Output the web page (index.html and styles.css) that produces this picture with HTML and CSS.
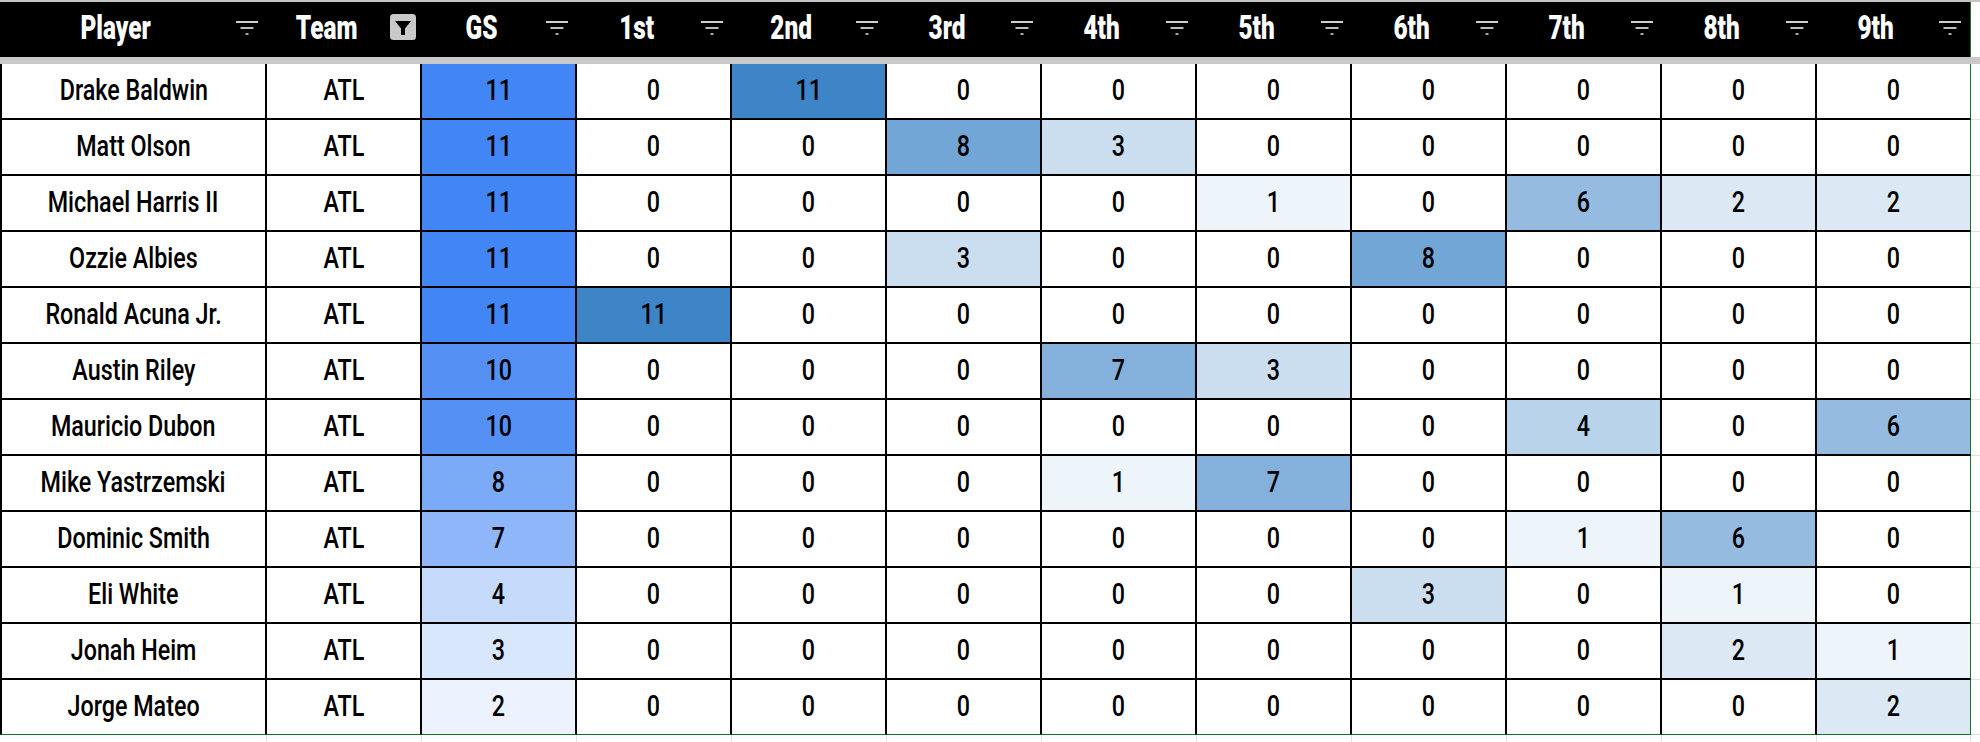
FILE: index.html
```html
<!DOCTYPE html>
<html lang="en">
<head>
<meta charset="utf-8">
<title>Batting order starts</title>
<link rel="stylesheet" href="styles.css">
</head>
<body>
<div class="sheet">
  <div class="topline"></div>
  <div class="row head">
    <div class="hc"><div class="label"><span>Player</span></div><svg class="filter" viewBox="0 0 22 14"><rect x="0" y="0" width="22" height="2" fill="#cfcfcf"/><rect x="4.5" y="6" width="13" height="2" fill="#bdbdbd"/><rect x="9.5" y="12" width="3" height="2" fill="#a8a8a8"/></svg></div>
    <div class="hc"><div class="label"><span>Team</span></div><svg class="filter-on" viewBox="0 0 26 26"><rect x="0" y="0" width="26" height="26" rx="3.5" fill="#c9c9c9"/><path d="M5 7H21L15 14.5V21H11V14.5Z" fill="#000"/></svg></div>
    <div class="hc"><div class="label"><span>GS</span></div><svg class="filter" viewBox="0 0 22 14"><rect x="0" y="0" width="22" height="2" fill="#cfcfcf"/><rect x="4.5" y="6" width="13" height="2" fill="#bdbdbd"/><rect x="9.5" y="12" width="3" height="2" fill="#a8a8a8"/></svg></div>
    <div class="hc"><div class="label"><span>1st</span></div><svg class="filter" viewBox="0 0 22 14"><rect x="0" y="0" width="22" height="2" fill="#cfcfcf"/><rect x="4.5" y="6" width="13" height="2" fill="#bdbdbd"/><rect x="9.5" y="12" width="3" height="2" fill="#a8a8a8"/></svg></div>
    <div class="hc"><div class="label"><span>2nd</span></div><svg class="filter" viewBox="0 0 22 14"><rect x="0" y="0" width="22" height="2" fill="#cfcfcf"/><rect x="4.5" y="6" width="13" height="2" fill="#bdbdbd"/><rect x="9.5" y="12" width="3" height="2" fill="#a8a8a8"/></svg></div>
    <div class="hc"><div class="label"><span>3rd</span></div><svg class="filter" viewBox="0 0 22 14"><rect x="0" y="0" width="22" height="2" fill="#cfcfcf"/><rect x="4.5" y="6" width="13" height="2" fill="#bdbdbd"/><rect x="9.5" y="12" width="3" height="2" fill="#a8a8a8"/></svg></div>
    <div class="hc"><div class="label"><span>4th</span></div><svg class="filter" viewBox="0 0 22 14"><rect x="0" y="0" width="22" height="2" fill="#cfcfcf"/><rect x="4.5" y="6" width="13" height="2" fill="#bdbdbd"/><rect x="9.5" y="12" width="3" height="2" fill="#a8a8a8"/></svg></div>
    <div class="hc"><div class="label"><span>5th</span></div><svg class="filter" viewBox="0 0 22 14"><rect x="0" y="0" width="22" height="2" fill="#cfcfcf"/><rect x="4.5" y="6" width="13" height="2" fill="#bdbdbd"/><rect x="9.5" y="12" width="3" height="2" fill="#a8a8a8"/></svg></div>
    <div class="hc"><div class="label"><span>6th</span></div><svg class="filter" viewBox="0 0 22 14"><rect x="0" y="0" width="22" height="2" fill="#cfcfcf"/><rect x="4.5" y="6" width="13" height="2" fill="#bdbdbd"/><rect x="9.5" y="12" width="3" height="2" fill="#a8a8a8"/></svg></div>
    <div class="hc"><div class="label"><span>7th</span></div><svg class="filter" viewBox="0 0 22 14"><rect x="0" y="0" width="22" height="2" fill="#cfcfcf"/><rect x="4.5" y="6" width="13" height="2" fill="#bdbdbd"/><rect x="9.5" y="12" width="3" height="2" fill="#a8a8a8"/></svg></div>
    <div class="hc"><div class="label"><span>8th</span></div><svg class="filter" viewBox="0 0 22 14"><rect x="0" y="0" width="22" height="2" fill="#cfcfcf"/><rect x="4.5" y="6" width="13" height="2" fill="#bdbdbd"/><rect x="9.5" y="12" width="3" height="2" fill="#a8a8a8"/></svg></div>
    <div class="hc hc-last"><div class="label"><span>9th</span></div><svg class="filter" viewBox="0 0 22 14"><rect x="0" y="0" width="22" height="2" fill="#cfcfcf"/><rect x="4.5" y="6" width="13" height="2" fill="#bdbdbd"/><rect x="9.5" y="12" width="3" height="2" fill="#a8a8a8"/></svg></div>
    <div class="hfill"></div>
  </div>
  <div class="band"></div>

  <div class="row"><div class="c first"><span>Drake Baldwin</span></div><div class="c"><span>ATL</span></div><div class="c g11"><span>11</span></div><div class="c"><span>0</span></div><div class="c b11"><span>11</span></div><div class="c"><span>0</span></div><div class="c"><span>0</span></div><div class="c"><span>0</span></div><div class="c"><span>0</span></div><div class="c"><span>0</span></div><div class="c"><span>0</span></div><div class="c last"><span>0</span></div><div class="fill"></div></div>
  <div class="row"><div class="c first"><span>Matt Olson</span></div><div class="c"><span>ATL</span></div><div class="c g11"><span>11</span></div><div class="c"><span>0</span></div><div class="c"><span>0</span></div><div class="c b8"><span>8</span></div><div class="c b3"><span>3</span></div><div class="c"><span>0</span></div><div class="c"><span>0</span></div><div class="c"><span>0</span></div><div class="c"><span>0</span></div><div class="c last"><span>0</span></div><div class="fill"></div></div>
  <div class="row"><div class="c first"><span>Michael Harris II</span></div><div class="c"><span>ATL</span></div><div class="c g11"><span>11</span></div><div class="c"><span>0</span></div><div class="c"><span>0</span></div><div class="c"><span>0</span></div><div class="c"><span>0</span></div><div class="c b1"><span>1</span></div><div class="c"><span>0</span></div><div class="c b6"><span>6</span></div><div class="c b2"><span>2</span></div><div class="c last b2"><span>2</span></div><div class="fill"></div></div>
  <div class="row"><div class="c first"><span>Ozzie Albies</span></div><div class="c"><span>ATL</span></div><div class="c g11"><span>11</span></div><div class="c"><span>0</span></div><div class="c"><span>0</span></div><div class="c b3"><span>3</span></div><div class="c"><span>0</span></div><div class="c"><span>0</span></div><div class="c b8"><span>8</span></div><div class="c"><span>0</span></div><div class="c"><span>0</span></div><div class="c last"><span>0</span></div><div class="fill"></div></div>
  <div class="row"><div class="c first"><span>Ronald Acuna Jr.</span></div><div class="c"><span>ATL</span></div><div class="c g11"><span>11</span></div><div class="c b11"><span>11</span></div><div class="c"><span>0</span></div><div class="c"><span>0</span></div><div class="c"><span>0</span></div><div class="c"><span>0</span></div><div class="c"><span>0</span></div><div class="c"><span>0</span></div><div class="c"><span>0</span></div><div class="c last"><span>0</span></div><div class="fill"></div></div>
  <div class="row"><div class="c first"><span>Austin Riley</span></div><div class="c"><span>ATL</span></div><div class="c g10"><span>10</span></div><div class="c"><span>0</span></div><div class="c"><span>0</span></div><div class="c"><span>0</span></div><div class="c b7"><span>7</span></div><div class="c b3"><span>3</span></div><div class="c"><span>0</span></div><div class="c"><span>0</span></div><div class="c"><span>0</span></div><div class="c last"><span>0</span></div><div class="fill"></div></div>
  <div class="row"><div class="c first"><span>Mauricio Dubon</span></div><div class="c"><span>ATL</span></div><div class="c g10"><span>10</span></div><div class="c"><span>0</span></div><div class="c"><span>0</span></div><div class="c"><span>0</span></div><div class="c"><span>0</span></div><div class="c"><span>0</span></div><div class="c"><span>0</span></div><div class="c b4"><span>4</span></div><div class="c"><span>0</span></div><div class="c last b6"><span>6</span></div><div class="fill"></div></div>
  <div class="row"><div class="c first"><span>Mike Yastrzemski</span></div><div class="c"><span>ATL</span></div><div class="c g8"><span>8</span></div><div class="c"><span>0</span></div><div class="c"><span>0</span></div><div class="c"><span>0</span></div><div class="c b1"><span>1</span></div><div class="c b7"><span>7</span></div><div class="c"><span>0</span></div><div class="c"><span>0</span></div><div class="c"><span>0</span></div><div class="c last"><span>0</span></div><div class="fill"></div></div>
  <div class="row"><div class="c first"><span>Dominic Smith</span></div><div class="c"><span>ATL</span></div><div class="c g7"><span>7</span></div><div class="c"><span>0</span></div><div class="c"><span>0</span></div><div class="c"><span>0</span></div><div class="c"><span>0</span></div><div class="c"><span>0</span></div><div class="c"><span>0</span></div><div class="c b1"><span>1</span></div><div class="c b6"><span>6</span></div><div class="c last"><span>0</span></div><div class="fill"></div></div>
  <div class="row"><div class="c first"><span>Eli White</span></div><div class="c"><span>ATL</span></div><div class="c g4"><span>4</span></div><div class="c"><span>0</span></div><div class="c"><span>0</span></div><div class="c"><span>0</span></div><div class="c"><span>0</span></div><div class="c"><span>0</span></div><div class="c b3"><span>3</span></div><div class="c"><span>0</span></div><div class="c b1"><span>1</span></div><div class="c last"><span>0</span></div><div class="fill"></div></div>
  <div class="row"><div class="c first"><span>Jonah Heim</span></div><div class="c"><span>ATL</span></div><div class="c g3"><span>3</span></div><div class="c"><span>0</span></div><div class="c"><span>0</span></div><div class="c"><span>0</span></div><div class="c"><span>0</span></div><div class="c"><span>0</span></div><div class="c"><span>0</span></div><div class="c"><span>0</span></div><div class="c b2"><span>2</span></div><div class="c last b1"><span>1</span></div><div class="fill"></div></div>
  <div class="row row-end"><div class="c first"><span>Jorge Mateo</span></div><div class="c"><span>ATL</span></div><div class="c g2"><span>2</span></div><div class="c"><span>0</span></div><div class="c"><span>0</span></div><div class="c"><span>0</span></div><div class="c"><span>0</span></div><div class="c"><span>0</span></div><div class="c"><span>0</span></div><div class="c"><span>0</span></div><div class="c"><span>0</span></div><div class="c last b2"><span>2</span></div><div class="fill"></div></div>

  <div class="row ghost"><div class="gc"></div><div class="gc"></div><div class="gc"></div><div class="gc"></div><div class="gc"></div><div class="gc"></div><div class="gc"></div><div class="gc"></div><div class="gc"></div><div class="gc"></div><div class="gc"></div><div class="gc"></div><div class="gfill"></div></div>
</div>
</body>
</html>
```

FILE: styles.css
```css
* {
  box-sizing: border-box;
  margin: 0;
  padding: 0;
}

body {
  margin: 0;
  width: 1980px;
  height: 742px;
  overflow: hidden;
  background: #ffffff;
  font-family: Roboto, "Liberation Sans", Arial, sans-serif;
  color: #000;
}

.sheet {
  display: flex;
  flex-direction: column;
  width: 1980px;
}

.topline {
  height: 2px;
  background: #c4c4c4;
}

.row {
  display: grid;
  grid-template-columns: 267px repeat(10, 155px) 154px 1fr;
}

/* header */
.hc {
  position: relative;
  height: 55px;
  background: #000;
  display: flex;
  align-items: center;
  padding-right: 36px;
  padding-bottom: 5px;
}

.hc-last {
  border-right: 1px solid #137333;
}

.hfill {
  background: #fff;
}

.label {
  flex: 1;
  text-align: center;
  color: #fff;
  font-size: 33px;
  font-weight: 900;
  line-height: 1;
  white-space: nowrap;
}

.label span {
  display: inline-block;
  transform: scaleX(0.74);
}

.filter {
  position: absolute;
  right: 9px;
  top: 19px;
  width: 22px;
  height: 14px;
}

.filter-on {
  position: absolute;
  right: 6px;
  top: 12px;
  width: 26px;
  height: 26px;
}

.band {
  height: 7px;
  background: #c9c9c9;
}

/* body cells */
.c {
  height: 56px;
  border-right: 2px solid #000;
  border-bottom: 2px solid #000;
  display: flex;
  align-items: center;
  justify-content: center;
  font-size: 29.5px;
  font-weight: 500;
  line-height: 1;
  white-space: nowrap;
  background: #fff;
}

.c span {
  display: inline-block;
  transform: scaleX(0.79);
}

.c.first {
  border-left: 2px solid #000;
}

.c.last {
  border-right: 1px solid #137333;
}

.row-end .c {
  height: 55px;
  border-bottom: 1px solid #137333;
}

.fill {
  border-bottom: 1px solid #e1e1e1;
}

.ghost {
  height: 7px;
}

.gc {
  border-right: 1px solid #e1e1e1;
}

/* GS column colour scale */
.g11 { background: #4285f4; }
.g10 { background: #5591f5; }
.g8  { background: #7baaf7; }
.g7  { background: #8eb6f8; }
.g4  { background: #c6dafc; }
.g3  { background: #d9e7fd; }
.g2  { background: #ecf3fe; }

/* batting slot colour scale */
.b11 { background: #3d85c6; }
.b8  { background: #72a6d6; }
.b7  { background: #84b1db; }
.b6  { background: #95bce0; }
.b4  { background: #b9d3ea; }
.b3  { background: #cadeef; }
.b2  { background: #dce9f5; }
.b1  { background: #edf4fa; }
```
